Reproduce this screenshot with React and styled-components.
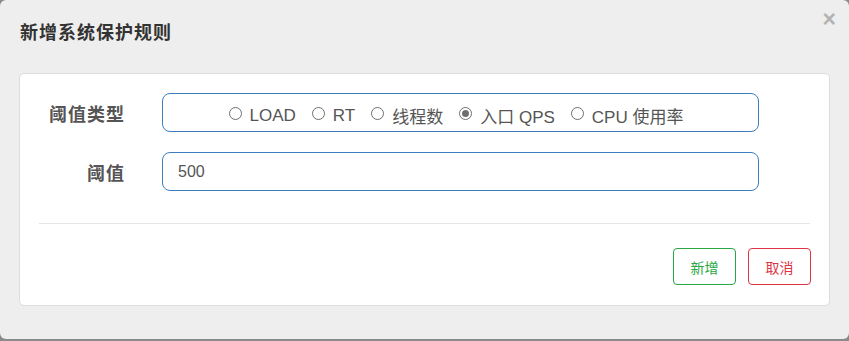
import React, { useState } from "react";
import styled, { createGlobalStyle } from "styled-components";

const GlobalStyle = createGlobalStyle`
  html, body { margin: 0; padding: 0; }
  body {
    background: #8a8a8a;
    font-family: "Liberation Sans", "Noto Sans CJK SC", sans-serif;
    width: 849px;
    height: 341px;
    overflow: hidden;
  }
`;

const Dialog = styled.div`
  position: relative;
  width: 849px;
  height: 339px;
  box-sizing: border-box;
  background: #eeeeee;
  border-radius: 6px;
  display: flex;
  flex-direction: column;
`;

const Header = styled.div`
  height: 73px;
  box-sizing: border-box;
  padding: 21px 20px 0 20px;
`;

const Title = styled.h4`
  margin: 0;
  font-size: 18px;
  line-height: 24px;
  font-weight: bold;
  color: #333;
  letter-spacing: 1px;
`;

const Close = styled.button`
  position: absolute;
  top: 7px;
  right: 13px;
  border: 0;
  background: transparent;
  padding: 0;
  font-family: "Liberation Sans", sans-serif;
  font-size: 23px;
  font-weight: bold;
  line-height: 24px;
  color: #b3b3b3;
  cursor: pointer;
`;

const Panel = styled.div`
  margin: 0 19px;
  background: #fff;
  border: 1px solid #dddddd;
  border-radius: 5px;
  height: 233px;
  box-sizing: border-box;
  display: flex;
  flex-direction: column;
`;

const Form = styled.div`
  display: grid;
  grid-template-columns: 104px 1fr;
  column-gap: 38px;
  row-gap: 20px;
  padding: 19px 70px 0 0;
`;

const Label = styled.label`
  text-align: right;
  align-self: center;
  font-size: 18px;
  font-weight: bold;
  color: #555;
  letter-spacing: 1px;
  margin-right: -1px;
`;

const Box = styled.div`
  height: 39px;
  box-sizing: border-box;
  border: 1px solid #3b7dbd;
  border-radius: 8px;
  display: flex;
  align-items: center;
  padding: 0 15px;
  font-size: 16px;
  color: #555;
`;

const RadioBox = styled(Box)`
  justify-content: center;
  padding-right: 24px;
  padding-top: 6px;
  gap: 16px;
  font-size: 17px;
`;

const RadioItem = styled.label`
  display: flex;
  align-items: center;
  gap: 8px;
  cursor: pointer;
  white-space: pre;
`;

const Circle = styled.span`
  width: 13px;
  height: 13px;
  box-sizing: border-box;
  border: 1px solid #6e6e6e;
  border-radius: 50%;
  display: flex;
  align-items: center;
  justify-content: center;
  margin-top: -4px;
  &::after {
    content: "";
    width: 7px;
    height: 7px;
    border-radius: 50%;
    background: ${(p) => (p.$checked ? "#6e6e6e" : "transparent")};
  }
`;

const Input = styled.input`
  height: 39px;
  box-sizing: border-box;
  border: 1px solid #3b7dbd;
  border-radius: 8px;
  padding: 0 15px;
  font-family: "Liberation Sans", "Noto Sans CJK SC", sans-serif;
  font-size: 16px;
  color: #555;
  outline: none;
  width: 100%;
`;

const Divider = styled.hr`
  margin: 32px 19px 0 19px;
  border: 0;
  border-top: 1px solid #e5e5e5;
`;

const Footer = styled.div`
  display: flex;
  justify-content: flex-end;
  gap: 12px;
  padding: 24px 18px 0 0;
`;

const Button = styled.button`
  width: 63px;
  height: 37px;
  box-sizing: border-box;
  background: #fff;
  border: 1px solid ${(p) => p.$color};
  color: ${(p) => p.$color};
  border-radius: 4px;
  font-family: "Liberation Sans", "Noto Sans CJK SC", sans-serif;
  font-size: 14px;
  cursor: pointer;
  padding: 0;
`;

const options = ["LOAD", "RT", "线程数", "入口 QPS", "CPU 使用率"];

export default function App() {
  const [sel, setSel] = useState("入口 QPS");
  return (
    <>
      <GlobalStyle />
      <Dialog>
        <Header>
          <Title>新增系统保护规则</Title>
        </Header>
        <Close>×</Close>
        <Panel>
          <Form>
            <Label>阈值类型</Label>
            <RadioBox>
              {options.map((o) => (
                <RadioItem key={o} onClick={() => setSel(o)}>
                  <Circle $checked={sel === o} />
                  {o}
                </RadioItem>
              ))}
            </RadioBox>
            <Label>阈值</Label>
            <Input defaultValue="500" />
          </Form>
          <Divider />
          <Footer>
            <Button $color="#28a745">新增</Button>
            <Button $color="#dc3545">取消</Button>
          </Footer>
        </Panel>
      </Dialog>
    </>
  );
}
